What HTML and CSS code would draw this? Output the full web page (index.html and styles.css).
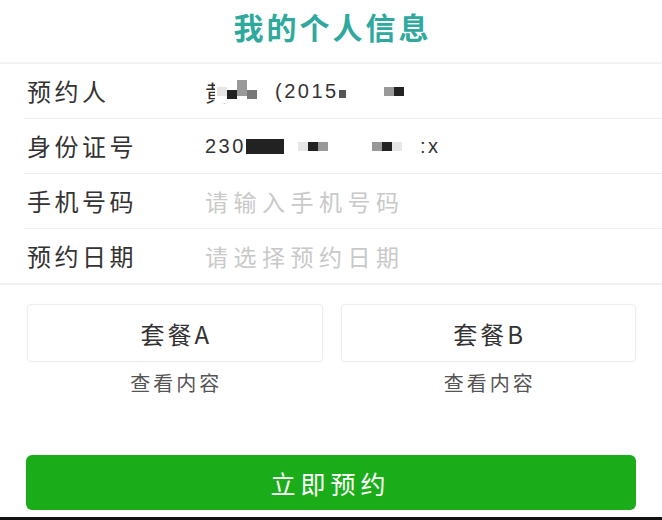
FILE: index.html
```html
<!DOCTYPE html>
<html lang="zh-CN">
<head>
    <meta charset="UTF-8">
    <meta name="viewport" content="width=device-width, initial-scale=1.0">
    <title>我的个人信息</title>
    <link rel="stylesheet" href="styles.css">
</head>
<body>
    <div class="page">
        <div class="header">我的个人信息</div>

        <div class="form">
            <div class="form-row">
                <div class="form-label">预约人</div>
                <div class="form-value">
                    <span class="ch">黄</span>
                    <span class="mosaic cover">
                        <i class="px light"></i><i class="px dark low"></i><i class="px mid tall"></i><i class="px mid2 low"></i>
                    </span>
                    <span class="gap-m"></span>(2015<i class="px corner"></i>
                    <span class="gap-l"></span>
                    <span class="mosaic"><i class="px mid"></i><i class="px dark"></i></span>
                </div>
            </div>
            <div class="form-row">
                <div class="form-label">身份证号</div>
                <div class="form-value">
                    230<span class="mosaic"><i class="px dark wide"></i><i class="px dark wide"></i></span>
                    <span class="gap-s"></span>
                    <span class="mosaic"><i class="px light"></i><i class="px dark"></i><i class="px mid"></i></span>
                    <span class="gap-xl"></span>
                    <span class="mosaic"><i class="px mid"></i><i class="px dark"></i><i class="px light"></i></span>
                    <span class="gap-m"></span>:x
                </div>
            </div>
            <div class="form-row">
                <div class="form-label">手机号码</div>
                <div class="form-value placeholder">请输入手机号码</div>
            </div>
            <div class="form-row">
                <div class="form-label">预约日期</div>
                <div class="form-value placeholder">请选择预约日期</div>
            </div>
        </div>

        <div class="packages">
            <div class="package">
                <div class="package-box">套餐A</div>
                <div class="package-link">查看内容</div>
            </div>
            <div class="package">
                <div class="package-box">套餐B</div>
                <div class="package-link">查看内容</div>
            </div>
        </div>

        <div class="submit-wrap">
            <button class="submit-btn">立即预约</button>
        </div>
    </div>
    <div class="bottom-edge"></div>
</body>
</html>
```

FILE: styles.css
```css
body {
    font-family: "Noto Sans CJK SC", "Liberation Sans", sans-serif;
    background: #fff;
    margin: 0;
    padding: 0;
    color: #333;
}

.page {
    height: 517px;
    display: flex;
    flex-direction: column;
}

.header {
    height: 62px;
    line-height: 52px;
    text-align: center;
    font-size: 30px;
    font-weight: 700;
    color: #2fa99d;
    letter-spacing: 3px;
    padding-left: 3px;
    border-bottom: 2px solid #f2f2f2;
}

.form {
    border-bottom: 2px solid #f2f2f2;
}

.form-row {
    display: flex;
    align-items: center;
    height: 54px;
    margin-left: 24px;
    padding-left: 3px;
    border-bottom: 1px solid #f0f0f0;
}

.form-row:last-child {
    border-bottom: none;
}

.form-label {
    width: 178px;
    font-size: 24px;
    letter-spacing: 3.5px;
    color: #333;
    padding-bottom: 2px;
}

.form-value {
    display: flex;
    align-items: center;
    font-size: 20px;
    letter-spacing: 2.5px;
    color: #333;
    font-family: "Liberation Sans", "Noto Sans CJK SC", sans-serif;
}

.form-value .ch {
    font-family: "Noto Sans CJK SC", sans-serif;
    font-size: 22px;
    letter-spacing: 0;
}

.mosaic.cover {
    margin-left: -12px;
    background: #fff;
    padding: 4px 0 4px 2px;
}

.placeholder {
    color: #c9c9c9;
    font-family: "Noto Sans CJK SC", sans-serif;
    font-size: 23px;
    letter-spacing: 5.5px;
}

.mosaic {
    display: inline-flex;
    align-items: center;
}

.px {
    display: inline-block;
    width: 10px;
    height: 9px;
    background: #bbb;
}

.px.light { background: #e6e6e6; }
.px.mid { background: #999; }
.px.mid2 { background: #777; }
.px.dark { background: #222; }
.px.wide { width: 19px; height: 15px; }
.px.tall { height: 16px; margin-top: -6px; }
.px.low { margin-top: 6px; }
.px.corner { width: 7px; height: 8px; background: #555; margin-top: 6px; }

.gap-s {
    display: inline-block;
    width: 14px;
}

.gap-m {
    display: inline-block;
    width: 18px;
}

.gap-l {
    display: inline-block;
    width: 38px;
}

.gap-xl {
    display: inline-block;
    width: 44px;
}

.packages {
    display: flex;
    gap: 18px;
    padding: 19px 26px 0 27px;
}

.package {
    flex: 1;
    display: flex;
    flex-direction: column;
    align-items: center;
}

.package-box {
    width: 100%;
    height: 58px;
    box-sizing: border-box;
    border: 1px solid #ececec;
    border-radius: 4px;
    box-shadow: 0 0 3px rgba(0, 0, 0, 0.04);
    display: flex;
    align-items: center;
    justify-content: center;
    font-size: 24px;
    letter-spacing: 3px;
    padding-left: 3px;
    color: #333;
}

.package-link {
    margin-top: 6px;
    font-size: 20px;
    letter-spacing: 3px;
    padding-left: 3px;
    color: #555;
}

.submit-wrap {
    margin-top: auto;
    padding: 0 26px 7px 26px;
}

.submit-btn {
    width: 100%;
    height: 55px;
    border: none;
    border-radius: 6px;
    background: #1aad19;
    color: #fff;
    font-family: "Noto Sans CJK SC", sans-serif;
    font-size: 25px;
    letter-spacing: 5px;
    padding-left: 5px;
}

.bottom-edge {
    height: 3px;
    background: #111;
}
```
